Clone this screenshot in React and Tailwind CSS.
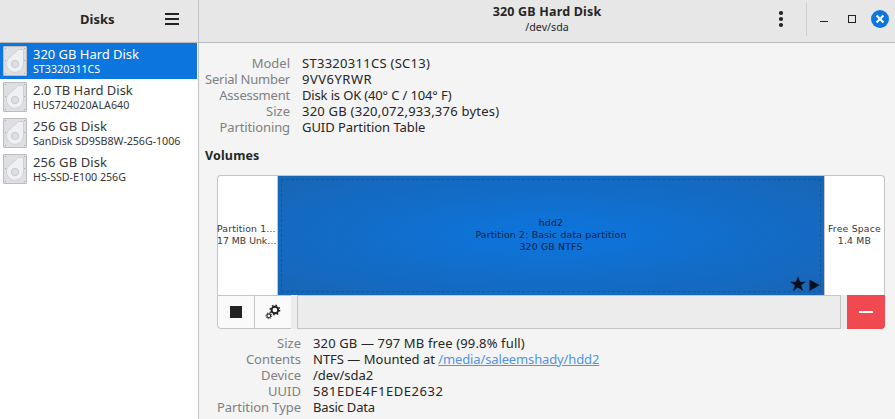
const disks = [
  { name: "320 GB Hard Disk", model: "ST3320311CS", selected: true, nameCls: "-tracking-[0.03px]", modelCls: "tracking-[0px]" },
  { name: "2.0 TB Hard Disk", model: "HUS724020ALA640", nameCls: "-tracking-[0.03px]", modelCls: "tracking-[0.03px]" },
  { name: "256 GB Disk", model: "SanDisk SD9SB8W-256G-1006", nameCls: "tracking-[0.1px]", modelCls: "-tracking-[0.06px]" },
  { name: "256 GB Disk", model: "HS-SSD-E100 256G", nameCls: "tracking-[0.1px]", modelCls: "-tracking-[0.03px]" },
];

function DriveIcon() {
  return (
    <svg width="24" height="30" viewBox="0 0 24 30" className="shrink-0">
      <rect x="0.5" y="0.5" width="23" height="29" rx="0.5" fill="#dedfe3" stroke="#bcbcbe" />
      <path d="M20.5 3.5 V18 A8.5 8.5 0 1 1 5.2 12.7 L14.5 4.2 Q15.5 3.5 16.5 3.5 Z" fill="#eff0f3" stroke="#cfd0d4" />
      <circle cx="12" cy="18" r="3.7" fill="#dcdde1" stroke="#cbccd0" />
      <g fill="#a9aaae">
        <rect x="2" y="2" width="1" height="1" />
        <rect x="21" y="2" width="1" height="1" />
        <rect x="2" y="14" width="1" height="1" />
        <rect x="21" y="14" width="1" height="1" />
        <rect x="2" y="27" width="1" height="1" />
        <rect x="21" y="27" width="1" height="1" />
      </g>
    </svg>
  );
}

function Gears() {
  return (
    <svg width="16" height="16" viewBox="0 0 16 16" fill="none" stroke="#222">
      <circle cx="9.9" cy="6" r="3.3" strokeWidth="1.9" />
      <circle cx="9.9" cy="6" r="4.7" strokeWidth="1.5" strokeDasharray="1.65 2.04" />
      <circle cx="3.8" cy="11.8" r="1.9" strokeWidth="1.1" />
      <circle cx="3.8" cy="11.8" r="2.9" strokeWidth="1" strokeDasharray="1.1 1.18" />
    </svg>
  );
}

function Row({ label, labelWidth, labelCls = "", valueCls = "", children }) {
  return (
    <div className="flex h-4 gap-3 whitespace-nowrap leading-4">
      <dt className={`${labelWidth} flex justify-end text-[#808080]`}>
        <span className={labelCls}>{label}</span>
      </dt>
      <dd className={`text-[#262626] ${valueCls}`}>{children}</dd>
    </div>
  );
}

export default function App() {
  return (
    <div className="flex h-[419px] w-[895px] overflow-hidden bg-[#f4f4f4] font-['Noto_Sans',sans-serif] text-[13px] text-[#262626]">
      <aside className="flex w-[199px] shrink-0 flex-col border-r border-[#c4c4c4] bg-white">
        <header className="flex h-[43px] items-center border-b border-[#b9b9b9] bg-[#e7e7e7] pl-20 pb-1">
          <h1 className="w-[85px] pt-0.5 text-[13px] font-bold">Disks</h1>
          <svg width="14" height="12" fill="#222">
            <rect width="14" height="2" />
            <rect y="5" width="14" height="2" />
            <rect y="10" width="14" height="2" />
          </svg>
        </header>
        <ul className="w-[197px]">
          {disks.map((d) => (
            <li key={d.model} className={`flex h-9 items-center gap-1.5 pl-[3px] whitespace-nowrap ${d.selected ? "bg-[#0c75de] text-white" : "text-[#363636]"}`}>
              <DriveIcon />
              <div>
                <div className={`h-4 text-[13px] leading-4 ${d.nameCls}`}>{d.name}</div>
                <div className={`h-[14px] text-[10.7px] leading-[14px] ${d.modelCls}`}>{d.model}</div>
              </div>
            </li>
          ))}
        </ul>
      </aside>
      <main className="flex w-[696px] flex-col">
        <header className="flex h-[43px] shrink-0 border-b border-[#b9b9b9] bg-[#e7e7e7]">
          <div className="ml-[248px] w-[200px] pt-1 text-center">
            <h2 className="h-4 text-[12.5px] font-bold leading-4 tracking-[0.18px]">320 GB Hard Disk</h2>
            <p className="h-[14px] text-[10.7px] leading-[14px]">/dev/sda</p>
          </div>
          <svg width="248" height="42" fill="#222">
            <circle cx="134" cy="13" r="2.1" />
            <circle cx="134" cy="19" r="2.1" />
            <circle cx="134" cy="25" r="2.1" />
            <rect x="159" y="2" width="1" height="34" fill="#cfcfcf" />
            <rect x="173" y="21" width="8" height="1" />
            <rect x="201.5" y="15.5" width="7" height="7" fill="none" stroke="#222" />
            <circle cx="233" cy="19" r="9" fill="#0c75de" />
            <path d="M229.6 15.6 L236.4 22.4 M236.4 15.6 L229.6 22.4" stroke="#fff" strokeWidth="2.1" />
          </svg>
        </header>
        <dl className="pt-3">
          <Row labelWidth="w-[91px]" label="Model" valueCls="tracking-[0.28px]">ST3320311CS (SC13)</Row>
          <Row labelWidth="w-[91px]" label="Serial Number" labelCls="-tracking-[0.23px]" valueCls="tracking-[0.5px]">9VV6YRWR</Row>
          <Row labelWidth="w-[91px]" label="Assessment" labelCls="-tracking-[0.2px]" valueCls="-tracking-[0.15px]">Disk is OK (40° C / 104° F)</Row>
          <Row labelWidth="w-[91px]" label="Size" valueCls="tracking-[0.23px]">320 GB (320,072,933,376 bytes)</Row>
          <Row labelWidth="w-[91px]" label="Partitioning" labelCls="-tracking-[0.12px]" valueCls="-tracking-[0.05px]">GUID Partition Table</Row>
        </dl>
        <h3 className="mt-[13px] ml-1.5 h-4 text-[12.5px] font-bold leading-4 tracking-[0.15px]">Volumes</h3>
        <section className="mt-[11px] ml-[18px] w-[668px]">
          <div className="flex h-[120px] rounded-t-[4px] border border-b-0 border-[#c4c4c4] bg-white text-center font-['DejaVu_Sans',sans-serif] text-[9.3px] leading-3 tracking-[0.2px] text-[#363636]">
            <div className="flex w-[60px] shrink-0 flex-col justify-center whitespace-nowrap border-r border-[#c4c4c4] pb-0.5 text-left tracking-[0.15px]">
              <p className="-ml-px">Partition 1…</p>
              <p className="-ml-px tracking-[0px]">17 MB Unk…</p>
            </div>
            <div className="relative flex w-[547px] shrink-0 flex-col justify-center border-r border-[#c4c4c4] bg-[radial-gradient(ellipse_at_center,#0c75de,#1865b4)] pb-0.5 text-[#07213f]">
              <div className="absolute inset-[3px] border border-dashed border-[#14569a]" />
              <p>hdd2</p>
              <p>Partition 2: Basic data partition</p>
              <p>320 GB NTFS</p>
              <svg width="30" height="16" className="absolute right-[4px] bottom-[3px]" fill="#07111e">
                <path d="M8 0 L10 5.7 H16 L11.2 9.2 L13 15 L8 11.5 L3 15 L4.8 9.2 L0 5.7 H6 Z" />
                <path d="M19.5 4.2 Q19.5 3.5 20.2 3.9 L29 8.8 Q29.5 9.2 29 9.6 L20.2 14.5 Q19.5 14.9 19.5 14.2 Z" />
              </svg>
            </div>
            <div className="flex w-[59px] flex-col justify-center whitespace-nowrap pb-0.5">
              <p>Free Space</p>
              <p>1.4 MB</p>
            </div>
          </div>
          <div className="flex h-[34px] rounded-b-[4px] bg-[#ececec]">
            <button className="flex w-[38px] items-center justify-center rounded-bl-[4px] border border-[#c4c4c4] bg-[#fafafa]">
              <span className="size-3 bg-[#222]" />
            </button>
            <button className="flex w-9 items-center justify-center border-y border-[#c4c4c4] bg-[#fafafa]">
              <Gears />
            </button>
            <div className="ml-1.5 w-[544px] border border-[#c4c4c4] bg-[#ececec]" />
            <button className="ml-1.5 flex w-[38px] items-center justify-center rounded-br-[4px] bg-[#f04a50]">
              <span className="h-0.5 w-3.5 bg-white" />
            </button>
          </div>
        </section>
        <dl className="pt-1.5">
          <Row labelWidth="w-[102px]" label="Size" valueCls="tracking-[0.14px]">320 GB — 797 MB free (99.8% full)</Row>
          <Row labelWidth="w-[102px]" label="Contents">
            NTFS — Mounted at <a className="-tracking-[0.13px] text-[#5294e2] underline">/media/saleemshady/hdd2</a>
          </Row>
          <Row labelWidth="w-[102px]" label="Device">/dev/sda2</Row>
          <Row labelWidth="w-[102px]" label="UUID" valueCls="tracking-[0.56px]">581EDE4F1EDE2632</Row>
          <Row labelWidth="w-[102px]" label="Partition Type" labelCls="-tracking-[0.06px]" valueCls="-tracking-[0.18px]">Basic Data</Row>
        </dl>
      </main>
    </div>
  );
}
